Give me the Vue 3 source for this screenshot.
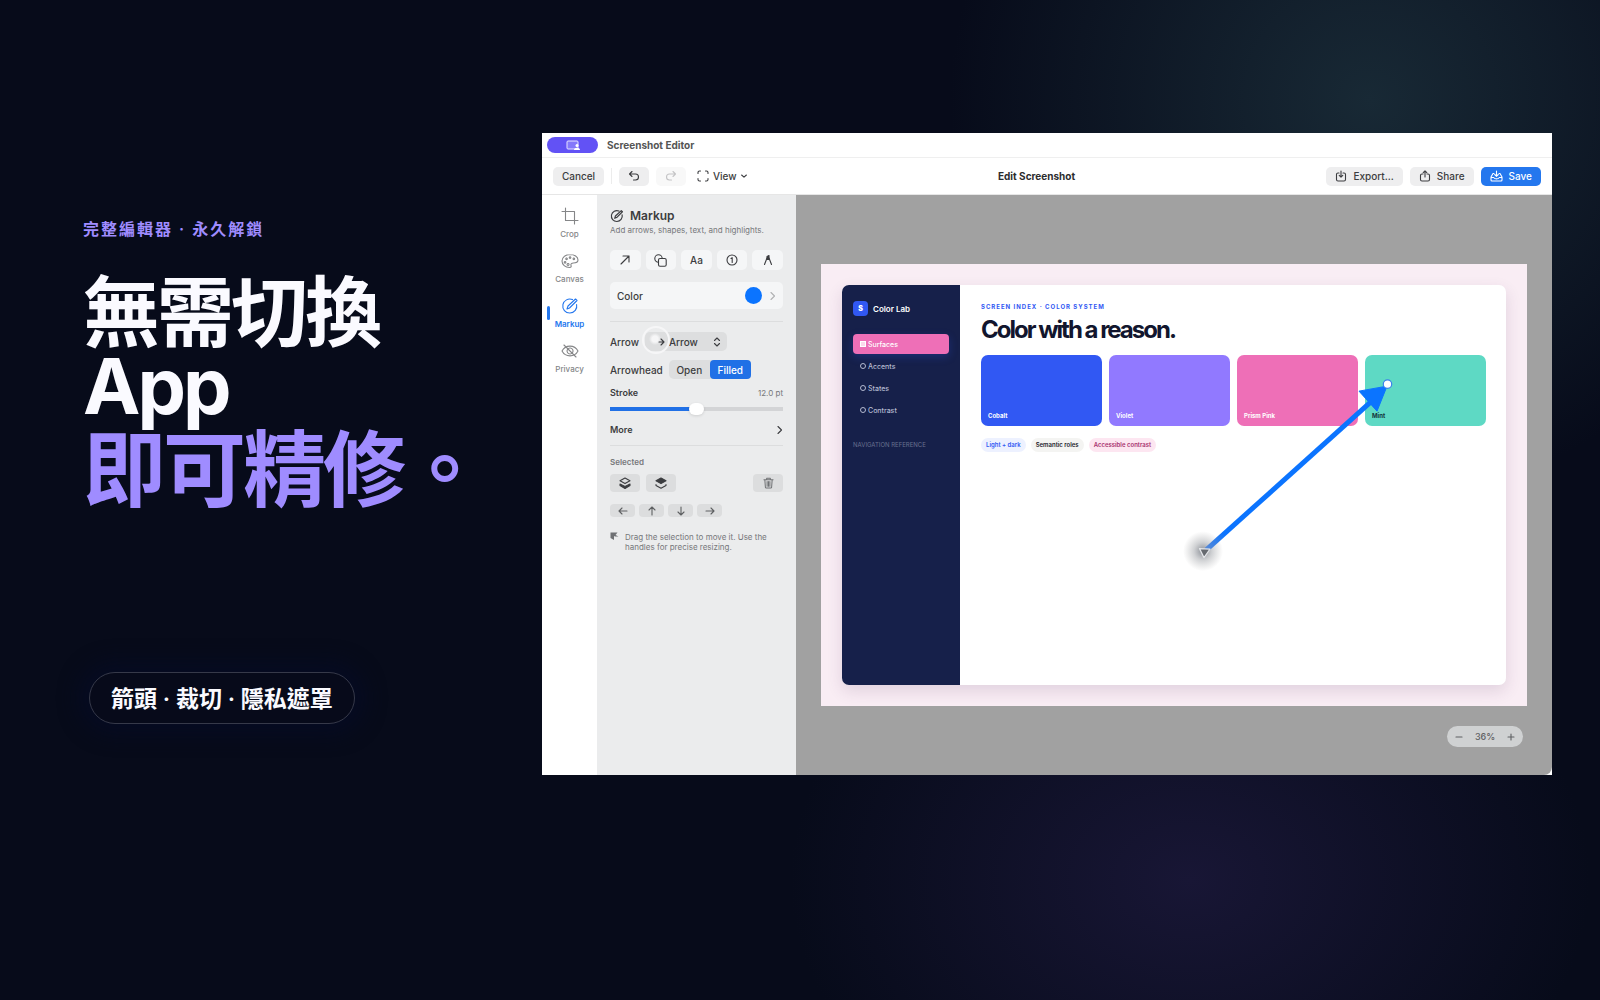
<template>
  <main class="stage">
    <section class="hero">
      <p class="eyebrow">完整編輯器 · 永久解鎖</p>
      <h1>
        <span>無需切換 App</span>
        <span class="accent">即可精修。</span>
      </h1>
      <p class="pill">箭頭 · 裁切 · 隱私遮罩</p>
    </section>

    <section class="editor">
      <header class="titlebar">
        <span class="badge">
          <svg width="14" height="11" viewBox="0 0 14 11">
            <rect x="1" y="1" width="11" height="8" rx="1" fill="#8478fa" stroke="#e6e3ff" />
            <circle cx="11" cy="5.6" r="1.5" fill="#fff" />
            <path d="M8 10c0-3 6-3 6 0z" fill="#fff" />
          </svg>
        </span>
        <span>Screenshot Editor</span>
      </header>

      <div class="toolbar">
        <div class="tools">
          <button class="btn cancel">Cancel</button>
          <i class="sep"></i>
          <button class="btn icon-btn" aria-label="Undo">
            <svg width="12" height="12" viewBox="0 0 12 12" class="line">
              <path d="M4 1.5 1.5 4 4 6.500M1.500 4H7.500a3 3 0 0 1 0 6H5.500" />
            </svg>
          </button>
          <button class="btn icon-btn" aria-label="Redo" disabled>
            <svg width="12" height="12" viewBox="0 0 12 12" class="line">
              <path d="M8 1.5 10.5 4 8 6.500M10.500 4H4.500a3 3 0 0 0 0 6H6.500" />
            </svg>
          </button>
          <button class="view">
            <svg width="12" height="12" viewBox="0 0 12 12" class="line">
              <path d="M1 3.500V2.500A1.500 1.500 0 0 1 2.500 1h1M8.500 1h1A1.500 1.500 0 0 1 11 2.500v1M11 8.500v1A1.500 1.500 0 0 1 9.500 11h-1M3.500 11h-1A1.500 1.500 0 0 1 1 9.500v-1" />
            </svg>
            View
            <svg width="6" height="6" viewBox="0 0 6 6" class="line"><path d="m.6 2 2.400 2.200L5.400 2" /></svg>
          </button>
        </div>
        <strong>Edit Screenshot</strong>
        <div class="tools end">
          <button class="btn">
            <svg width="12" height="12" viewBox="0 0 12 12" class="line">
              <path d="M4 3H3a1.500 1.500 0 0 0-1.500 1.500v5A1.500 1.500 0 0 0 3 11h6a1.500 1.500 0 0 0 1.500-1.500v-5A1.500 1.500 0 0 0 9 3H8M6 1v6M4.200 5.300 6 7.100l1.800-1.800" />
            </svg>
            Export...
          </button>
          <button class="btn">
            <svg width="12" height="12" viewBox="0 0 12 12" class="line">
              <path d="M4 4H3a1.500 1.500 0 0 0-1.500 1.500v4A1.500 1.500 0 0 0 3 11h6a1.500 1.500 0 0 0 1.500-1.500v-4A1.500 1.500 0 0 0 9 4H8M6 7V1M4.200 2.600 6 .8l1.800 1.800" />
            </svg>
            Share
          </button>
          <button class="btn primary">
            <svg width="13" height="12" viewBox="0 0 13 12" class="line">
              <path d="M4 3.500H3L1 7v3a1 1 0 0 0 1 1h9a1 1 0 0 0 1-1V7l-2-3.500H9M1 7.500h2.800c.3 1.800 5.100 1.800 5.400 0H12M6.500 1v5.300M4.700 4.500l1.800 1.800 1.800-1.800" />
            </svg>
            Save
          </button>
        </div>
      </div>

      <div class="body">
        <nav class="rail">
          <a v-for="item in rail" :key="item.label" href="#" :class="{ active: item.active }">
            <svg width="18" height="18" viewBox="0 0 18 18" class="line">
              <path v-for="d in item.paths" :key="d" :d="d" />
            </svg>
            {{ item.label }}
          </a>
        </nav>

        <aside class="panel">
          <h2>
            <svg width="14" height="14" viewBox="0 0 18 18" class="line thick">
              <path v-for="d in markup" :key="d" :d="d" />
            </svg>
            Markup
          </h2>
          <p class="hint">Add arrows, shapes, text, and highlights.</p>

          <div class="shapes">
            <button aria-label="Arrow">
              <svg width="12" height="12" viewBox="0 0 12 12" class="line"><path d="m2 10 8-8M4 2h6v6" /></svg>
            </button>
            <button aria-label="Shapes">
              <svg width="13" height="13" viewBox="0 0 13 13" class="line">
                <circle cx="4.500" cy="4.500" r="3.700" />
                <rect x="4.500" y="4.500" width="7.700" height="7.700" rx="1.500" fill="#f5f6f7" />
              </svg>
            </button>
            <button>Aa</button>
            <button aria-label="Counter">
              <svg width="12" height="12" viewBox="0 0 12 12" class="line">
                <circle cx="6" cy="6" r="5" />
                <path d="m5 4.500 1.200-.8v4.800" />
              </svg>
            </button>
            <button aria-label="Highlighter">
              <svg width="12" height="12" viewBox="0 0 12 12" class="line">
                <path d="M2.500 10.500 5 4h2l2.500 6.500" />
                <path d="M5 5.500V2.500l2-1v4z" fill="currentColor" />
              </svg>
            </button>
          </div>

          <button class="color">
            Color
            <span class="dot"></span>
            <svg width="6" height="10" viewBox="0 0 6 10" class="line pale"><path d="m1 1.500 3.500 3.500L1 8.500" /></svg>
          </button>

          <hr />

          <div class="row">
            <label for="arrow-style">Arrow</label>
            <div class="select">
              <select id="arrow-style">
                <option>Arrow</option>
              </select>
              <svg class="select-caret line" width="8" height="10" viewBox="0 0 8 10"><path d="m1.500 3.500L4 1l2.500 2.500M1.500 6.500 4 9l2.500-2.500" /></svg>
              <span class="tap"></span>
              <svg class="select-arrow line" width="10" height="10" viewBox="0 0 10 10"><path d="M3 5h5M5 2l3 3-3 3" /></svg>
            </div>
          </div>
          <div class="row head-row">
            <span>Arrowhead</span>
            <div class="segment">
              <button>Open</button>
              <button class="on">Filled</button>
            </div>
          </div>

          <div class="stroke-row">
            <label for="stroke">Stroke</label>
            <output for="stroke">12.0 pt</output>
          </div>
          <input id="stroke" v-model="stroke" type="range" min="0" max="24" />

          <button class="more">
            More
            <svg width="6" height="10" viewBox="0 0 6 10" class="line"><path d="m1 1.500 3.500 3.500L1 8.500" /></svg>
          </button>

          <hr />

          <h3>Selected</h3>
          <div class="layers">
            <button aria-label="Send backward">
              <svg width="12" height="12" viewBox="0 0 12 12" class="line">
                <path d="M6 1 1 3.800l5 2.800 5-2.800z" />
                <path d="m1 7 5 2.500L11 7v1.500L6 11.500l-5-3z" fill="currentColor" />
              </svg>
            </button>
            <button aria-label="Bring forward">
              <svg width="12" height="12" viewBox="0 0 12 12" class="line">
                <path d="M6 1 1 3.800l5 2.800 5-2.800z" fill="currentColor" />
                <path d="m1 7.500v1l5 2.800 5-2.800v-1" />
              </svg>
            </button>
            <button class="trash" aria-label="Delete">
              <svg width="11" height="12" viewBox="0 0 12 13" class="line">
                <path d="M1 3h10M4 3V1.200h4V3M2 3l.6 8.200a1 1 0 0 0 1 .8h4.800a1 1 0 0 0 1-.8L10 3M4.500 5v5M6 5v5M7.500 5v5" />
              </svg>
            </button>
          </div>
          <div class="nudge">
            <button v-for="n in nudges" :key="n.label" :aria-label="n.label">
              <svg width="10" height="10" viewBox="0 0 10 10" class="line"><path :d="n.d" /></svg>
            </button>
          </div>

          <p class="tip">
            <svg width="9" height="9" viewBox="0 0 9 9"><path d="M.5.500h7L5.500 3 8.500 4.500 5 4.500 4 4v4L.5 6z" fill="#6f7174" /></svg>
            Drag the selection to move it. Use the handles for precise resizing.
          </p>
        </aside>

        <div class="canvas">
          <div class="frame">
            <div class="card">
              <div class="lab-side">
                <div class="brand"><b>S</b>Color Lab</div>
                <a v-for="l in labLinks" :key="l" href="#" :class="{ active: l === 'Surfaces' }"><i></i>{{ l }}</a>
                <p>NAVIGATION REFERENCE</p>
              </div>
              <div class="lab-main">
                <p class="index">SCREEN INDEX · COLOR SYSTEM</p>
                <h4>Color with a reason.</h4>
                <div class="swatches">
                  <div v-for="s in swatches" :key="s.name" :class="s.cls">{{ s.name }}</div>
                </div>
                <div class="chips">
                  <span class="c-blue">Light + dark</span>
                  <span class="c-gray">Semantic roles</span>
                  <span class="c-pink">Accessible contrast</span>
                </div>
              </div>
            </div>
            <svg class="drawn-arrow" viewBox="0 0 706 441">
              <defs>
                <radialGradient id="blob">
                  <stop offset="0" stop-color="#555b66" stop-opacity=".7" />
                  <stop offset=".45" stop-color="#6b7078" stop-opacity=".32" />
                  <stop offset="1" stop-color="#888" stop-opacity="0" />
                </radialGradient>
                <linearGradient id="shaft" gradientUnits="userSpaceOnUse" x1="381" y1="289" x2="403" y2="269">
                  <stop offset="0" stop-color="#6d8fca" />
                  <stop offset="1" stop-color="#0b74ff" />
                </linearGradient>
              </defs>
              <circle cx="382" cy="287" r="20" fill="url(#blob)" />
              <path d="M385 286 554 134" stroke="url(#shaft)" stroke-width="5" />
              <path d="m566 122-28 5 18 20z" fill="#0b74ff" stroke="#0b74ff" />
              <circle cx="566.500" cy="120" r="4.200" fill="#fff" stroke="#3c82ea" stroke-width="1.200" />
              <path d="m378.500 284.500 10.500.5-6 8.500z" fill="#666a70" stroke="#e4e6ea" stroke-width="1.200" stroke-linejoin="round" />
            </svg>
          </div>
          <div class="zoom">
            <button aria-label="Zoom out"><svg width="8" height="8" viewBox="0 0 8 8" class="line"><path d="M1 4h6" /></svg></button>
            <span>36%</span>
            <button aria-label="Zoom in"><svg width="8" height="8" viewBox="0 0 8 8" class="line"><path d="M1 4h6M4 1v6" /></svg></button>
          </div>
        </div>
      </div>
    </section>
  </main>
</template>

<script setup>
import { ref } from "vue";

const stroke = ref(12);

const markup = [
  "M11.500 2.600A7 7 0 1 0 15.600 7.500",
  "M6 12l1-3 7.500-7 1.500 1.500-7.500 7.500z",
];

const rail = [
  { label: "Crop", paths: ["M4.500 1v12.500H17", "M1 4.500h12.500V17"] },
  {
    label: "Canvas",
    paths: [
      "M9 2.500C4.500 2.500 1 5.300 1 9s3.300 6.500 7.500 6.500c2 0 1.800-1.300 1.500-2.200-.5-1.600.8-2.300 2.300-2.300 2.700 0 4.700-.6 4.700-3 0-3.300-3.700-5.500-8-5.500z",
      "M4 9.500a.8.800 0 1 0 .1 0M5.500 6a.8.800 0 1 0 .1 0M9 4.800a.8.800 0 1 0 .1 0M12.800 6a.8.800 0 1 0 .1 0",
      "M7 11.500a1 1 0 1 0 .1 0",
    ],
  },
  { label: "Markup", paths: markup, active: true },
  {
    label: "Privacy",
    paths: [
      "M1 9c3.500-6.500 12.500-6.500 16 0-3.500 6.500-12.500 6.500-16 0z",
      "M9 6a3 3 0 1 0 .1 0",
      "M3 3l12 12",
    ],
  },
];

const nudges = [
  { label: "Left", d: "M9 5H1M4 2 1 5l3 3" },
  { label: "Up", d: "M5 9V1M2 4l3-3 3 3" },
  { label: "Down", d: "M5 1v8M2 6l3 3 3-3" },
  { label: "Right", d: "M1 5h8M6 2l3 3-3 3" },
];

const labLinks = ["Surfaces", "Accents", "States", "Contrast"];

const swatches = [
  { name: "Cobalt", cls: "cobalt" },
  { name: "Violet", cls: "violet" },
  { name: "Prism Pink", cls: "pink" },
  { name: "Mint", cls: "mint" },
];
</script>

<style>
body {
  margin: 0;
  background: #070b1a;
}
</style>

<style scoped>
* {
  box-sizing: border-box;
}

.stage {
  min-height: 100vh;
  display: grid;
  grid-template-columns: 459px 1fr;
  align-items: start;
  padding: 133px 48px 0 83px;
  font-family: Inter, "Liberation Sans", "Noto Sans CJK TC", sans-serif;
  background:
    radial-gradient(ellipse 420px 400px at 1370px 100px, #182935, rgba(7, 11, 26, 0)),
    radial-gradient(ellipse 400px 300px at 1190px 880px, #181635, rgba(7, 11, 26, 0)),
    #070b1a;
}

h1, h2, h3, h4, p {
  margin: 0;
}

button {
  font: inherit;
  color: inherit;
  border: 0;
  padding: 0;
  background: none;
  display: flex;
  align-items: center;
  justify-content: center;
}

a {
  color: inherit;
  text-decoration: none;
}

svg {
  flex: none;
}

.line {
  fill: none;
  stroke: currentColor;
  stroke-width: 1.1;
  stroke-linecap: round;
  stroke-linejoin: round;
}

.thick {
  stroke-width: 1.5;
}

/* Hero */
.hero {
  padding-top: 84px;
  color: #fafaff;
}

.eyebrow {
  font-size: 16px;
  line-height: 24px;
  font-weight: 600;
  letter-spacing: 2px;
  color: #9f8cff;
}

h1 {
  max-width: 420px;
  margin-top: 36px;
  font-size: 77px;
  line-height: 73px;
  font-weight: 700;
  letter-spacing: -3px;
}

h1 span {
  display: block;
}

h1 .accent {
  margin-top: 6px;
  font-size: 83px;
  line-height: 83px;
  color: #9f8cff;
}

.pill {
  width: fit-content;
  margin: 160px 0 0 6px;
  padding: 2px 21px 0;
  font-size: 23px;
  line-height: 48px;
  font-weight: 600;
  border: 1px solid #363949;
  border-radius: 26px;
  background: #070a1a;
  box-shadow: 0 0 20px 10px #060b22;
}

/* Editor */
.editor {
  aspect-ratio: 1010 / 642;
  display: flex;
  flex-direction: column;
  background: #fff;
  color: #3c3d40;
  font-size: 10px;
  font-weight: 500;
}

.titlebar {
  height: 25px;
  display: flex;
  align-items: center;
  gap: 9px;
  padding-left: 5px;
  font-weight: 700;
  color: #555;
  border-bottom: 1px solid #efefef;
}

.badge {
  width: 51px;
  height: 16px;
  display: flex;
  align-items: center;
  justify-content: center;
  border-radius: 8px;
  background: #6252f5;
}

.toolbar {
  height: 37px;
  display: flex;
  align-items: center;
  justify-content: space-between;
  padding: 0 11px;
  border-bottom: 1px solid #e6e6e6;
}

.toolbar strong {
  font-weight: 700;
  color: #2c2c2e;
}

.tools {
  display: flex;
  align-items: center;
  gap: 7px;
}

.btn {
  height: 19px;
  gap: 6px;
  padding: 0 9px;
  border-radius: 5px;
  background: #eeeeef;
}

.cancel {
  width: 51px;
}

.sep {
  width: 1px;
  height: 16px;
  background: #ececec;
}

.icon-btn {
  width: 30px;
  padding: 0;
}

.icon-btn:disabled {
  color: #c4c4c6;
  background: #f8f8f8;
}

.view {
  gap: 4px;
  padding-left: 4px;
}

.primary {
  background: #2477ee;
  color: #fff;
}

.body {
  flex: 1;
  display: grid;
  grid-template-columns: 55px 199px 1fr;
}

.rail {
  display: flex;
  flex-direction: column;
  gap: 14px;
  padding-top: 12px;
}

.rail a {
  position: relative;
  display: flex;
  flex-direction: column;
  align-items: center;
  gap: 5px;
  font-size: 8px;
  line-height: 8px;
  color: #858688;
}

.rail .active {
  color: #2477ee;
  font-weight: 600;
}

.rail .active::before {
  content: "";
  position: absolute;
  left: 5px;
  top: 9px;
  width: 3px;
  height: 14px;
  border-radius: 2px;
  background: #2477ee;
}

.panel {
  padding: 14px 13px;
  background: #ebeced;
}

h2 {
  display: flex;
  align-items: center;
  gap: 6px;
  font-size: 12px;
  line-height: 14px;
  font-weight: 600;
}

.hint {
  margin-top: 2px;
  font-size: 8px;
  line-height: 10px;
  font-weight: 400;
  color: #77787b;
  white-space: nowrap;
}

.shapes {
  display: grid;
  grid-template-columns: repeat(5, 1fr);
  gap: 5px;
  margin-top: 15px;
}

.shapes button {
  height: 20px;
  border-radius: 5px;
  background: #f5f6f7;
}

.color {
  width: 100%;
  height: 27px;
  margin-top: 12px;
  padding: 0 7px;
  border-radius: 5px;
  background: #f5f6f7;
}

.dot {
  width: 17px;
  height: 17px;
  margin: 0 8px 0 auto;
  border-radius: 50%;
  background: #0b74ff;
}

.pale {
  color: #b0b1b3;
}

hr {
  margin: 12px 0 10px;
  border: 0;
  border-top: 1px solid #dcddde;
}

.row {
  display: flex;
  align-items: center;
  gap: 6px;
  height: 19px;
}

.head-row {
  margin-top: 9px;
}

.select {
  position: relative;
  width: 82px;
  height: 19px;
}

.select select {
  width: 100%;
  height: 100%;
  padding: 0 0 0 24px;
  appearance: none;
  border: 0;
  border-radius: 5px;
  background: #dddedf;
  color: inherit;
  font: inherit;
}

.select-arrow {
  position: absolute;
  left: 11px;
  top: 5px;
}

.select-caret {
  position: absolute;
  right: 6px;
  top: 5px;
}

/* Touch marker above the select */
.tap {
  position: absolute;
  left: -3px;
  top: -6px;
  width: 28px;
  height: 28px;
  border: 2px solid #f6f6f7;
  border-radius: 50%;
  background: radial-gradient(circle at 11px 11px, #f6f6f7 3px, transparent 6px);
}

.segment {
  display: flex;
  border-radius: 5px;
  background: #dddedf;
}

.segment button {
  width: 41px;
  height: 19px;
  border-radius: 4px;
}

.segment .on {
  background: #2070e6;
  color: #fff;
}

.stroke-row {
  display: flex;
  justify-content: space-between;
  margin-top: 9px;
  font-size: 9px;
  line-height: 10px;
  font-weight: 600;
}

.stroke-row output {
  font-size: 8px;
  font-weight: 400;
  color: #77787b;
}

input[type="range"] {
  display: block;
  width: 100%;
  height: 12px;
  margin: 5px 0 0;
  appearance: none;
  background: linear-gradient(90deg, #2070e6 50%, #d3d4d6 50%) center / 100% 4px no-repeat;
}

input[type="range"]::-webkit-slider-thumb {
  appearance: none;
  width: 15px;
  height: 12px;
  border-radius: 6px;
  background: #fff;
  box-shadow: 0 1px 3px rgba(0, 0, 0, 0.12);
}

.more {
  width: 100%;
  justify-content: space-between;
  margin-top: 9px;
  font-size: 9px;
  line-height: 12px;
  font-weight: 600;
}

.more + hr {
  margin: 9px 0 11px;
}

h3 {
  font-size: 8px;
  line-height: 10px;
  font-weight: 600;
  color: #77787b;
}

.layers {
  display: flex;
  gap: 6px;
  margin-top: 7px;
}

.layers button {
  width: 30px;
  height: 18px;
  border-radius: 4px;
  background: #dcddde;
}

.layers .trash {
  margin-left: auto;
  color: #6f7174;
}

.nudge {
  display: flex;
  gap: 4px;
  margin-top: 12px;
  color: #5e6062;
}

.nudge button {
  width: 25px;
  height: 13px;
  border-radius: 4px;
  background: #dcddde;
}

.tip {
  display: flex;
  gap: 6px;
  margin-top: 15px;
  font-size: 8px;
  line-height: 10px;
  font-weight: 400;
  color: #77787b;
}

/* Canvas */
.canvas {
  position: relative;
  display: flex;
  align-items: center;
  padding: 0 25px;
  background: #a1a1a1;
  border-bottom-right-radius: 8px;
}

.frame {
  position: relative;
  flex: 1;
  aspect-ratio: 16 / 10;
  display: flex;
  padding: 21px;
  background: #f9edf4;
}

.card {
  flex: 1;
  display: grid;
  grid-template-columns: 118px 1fr;
  overflow: hidden;
  border-radius: 7px;
  background: #fff;
  box-shadow: 0 6px 16px rgba(80, 40, 90, 0.14);
}

.lab-side {
  padding: 16px 11px;
  background: #16204a;
  color: #b4bad0;
  font-size: 7px;
}

.brand {
  display: flex;
  align-items: center;
  gap: 5px;
  margin-bottom: 18px;
  color: #fff;
  font-size: 8px;
  font-weight: 600;
}

.brand b {
  width: 15px;
  height: 15px;
  border-radius: 4px;
  background: #3158f3;
  font-size: 7px;
  line-height: 15px;
  text-align: center;
}

.lab-side a {
  display: flex;
  align-items: center;
  gap: 2px;
  height: 20px;
  margin-bottom: 2px;
  padding-left: 7px;
  border-radius: 4px;
}

.lab-side a i {
  width: 6px;
  height: 6px;
  border: 1px solid #b4bad0;
  border-radius: 50%;
}

.lab-side .active {
  background: #ee6fb7;
  color: #fff;
  box-shadow: 0 3px 8px rgba(49, 88, 243, 0.25);
}

.lab-side .active i {
  border-color: #fff;
  border-radius: 0;
  background: #fbd9ec;
}

.lab-side p {
  margin-top: 21px;
  font-size: 6px;
  line-height: 8px;
  font-weight: 400;
  color: #69718f;
  white-space: nowrap;
}

.lab-main {
  padding: 18px 20px 18px 21px;
}

.index {
  font-size: 6px;
  line-height: 8px;
  font-weight: 700;
  letter-spacing: 1px;
  color: #3158f3;
}

h4 {
  margin-top: 5px;
  font-size: 24px;
  line-height: 28px;
  font-weight: 700;
  letter-spacing: -2px;
  color: #12162e;
}

.swatches {
  display: grid;
  grid-template-columns: repeat(4, 1fr);
  gap: 7px;
  margin-top: 11px;
}

.swatches div {
  height: 71px;
  display: flex;
  align-items: flex-end;
  padding: 7px;
  border-radius: 7px;
  color: #fff;
  font-size: 6px;
  font-weight: 700;
}

.swatches .cobalt { background: #3158f3; }
.swatches .violet { background: #9179ff; }
.swatches .pink { background: #ee6fb7; }
.swatches .mint { background: #5ed9c4; color: #14323a; }

.chips {
  display: flex;
  gap: 5px;
  margin-top: 12px;
}

.chips span {
  padding: 0 5px;
  border-radius: 7px;
  font-size: 6px;
  line-height: 14px;
  font-weight: 600;
}

.c-blue { background: #edf1ff; color: #3158f3; }
.c-gray { background: #f4f4f2; color: #22232b; }
.c-pink { background: #fde6f1; color: #a8326f; }

.drawn-arrow {
  position: absolute;
  inset: 0;
  width: 100%;
  height: 100%;
}

.zoom {
  position: absolute;
  right: 29px;
  bottom: 28px;
  width: 76px;
  height: 21px;
  display: flex;
  align-items: center;
  justify-content: space-between;
  padding: 0 8px;
  border-radius: 11px;
  background: #cfd1d2;
  font-size: 9px;
  color: #5e6062;
}
</style>
